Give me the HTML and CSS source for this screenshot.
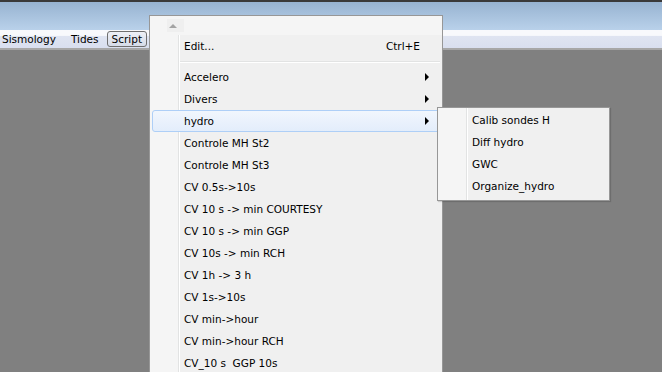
FILE: index.html
```html
<!DOCTYPE html>
<html lang="en">
<head>
    <meta charset="UTF-8">
    <title>Script menu</title>
    <link rel="stylesheet" href="styles.css">
</head>
<body>
    <div class="titlebar"></div>
    <div class="menubar">
        <span class="menubar-item">Sismology</span>
        <span class="menubar-item">Tides</span>
        <span class="menubar-item active">Script</span>
    </div>
    <div class="workspace"></div>

    <div class="popup main-menu">
        <div class="scroll-up"><span class="up-arrow"></span></div>
        <div class="items">
            <div class="item"><span class="label">Edit...</span><span class="shortcut">Ctrl+E</span></div>
            <div class="separator"></div>
            <div class="item"><span class="label">Accelero</span><span class="arrow"></span></div>
            <div class="item"><span class="label">Divers</span><span class="arrow"></span></div>
            <div class="item hover"><span class="label">hydro</span><span class="arrow"></span></div>
            <div class="item"><span class="label">Controle MH St2</span></div>
            <div class="item"><span class="label">Controle MH St3</span></div>
            <div class="item"><span class="label">CV 0.5s-&gt;10s</span></div>
            <div class="item"><span class="label">CV 10 s -&gt; min COURTESY</span></div>
            <div class="item"><span class="label">CV 10 s -&gt; min GGP</span></div>
            <div class="item"><span class="label">CV 10s -&gt; min RCH</span></div>
            <div class="item"><span class="label">CV 1h -&gt; 3 h</span></div>
            <div class="item"><span class="label">CV 1s-&gt;10s</span></div>
            <div class="item"><span class="label">CV min-&gt;hour</span></div>
            <div class="item"><span class="label">CV min-&gt;hour RCH</span></div>
            <div class="item"><span class="label">CV_10 s&nbsp; GGP 10s</span></div>
        </div>
    </div>

    <div class="popup sub-menu">
        <div class="item"><span class="label">Calib sondes H</span></div>
        <div class="item"><span class="label">Diff hydro</span></div>
        <div class="item"><span class="label">GWC</span></div>
        <div class="item"><span class="label">Organize_hydro</span></div>
    </div>
</body>
</html>
```
FILE: styles.css
```css
html, body { margin: 0; height: 100%; overflow: hidden; }
body { font-family: "DejaVu Sans", Tahoma, sans-serif; font-size: 10.5px; color: #000; background: #808080;
    display: flex; flex-direction: column; }

.titlebar { height: 28px; flex: none; border-top: 2px solid #3a3a3a; background: linear-gradient(#97b3d1, #b9d1ea); }
.menubar { height: 18px; flex: none; display: flex; align-items: center; padding: 0 0 0 2px; border-bottom: 2px solid #a7a7a7;
    background: linear-gradient(#f8f9fc 0, #f8f9fc 30%, #dfe4f1 35%, #d9dfef 100%); }
.menubar-item { line-height: 16px; }
.menubar-item:first-child { margin-right: 15px; }
.menubar-item.active { margin-left: 8px; padding: 0 4px; border: 1px solid #6f6f6f; border-radius: 3px;
    background: linear-gradient(#eef0f6, #d6dbe8); line-height: 14px; }
.workspace { flex: 1; }

.popup { position: absolute; box-sizing: border-box; background: #f0f0f0; border: 1px solid #979797; overflow: hidden; }

.main-menu { left: 149px; top: 15px; width: 294px; height: 357px; padding: 0 2px; border-bottom: 0;
    background: linear-gradient(90deg, #f5f5f5 0, #f5f5f5 28px, #e2e3e3 28px, #e2e3e3 29px, #fff 29px, #fff 30px, #f0f0f0 30px); }
.scroll-up { height: 19px; margin: 0 -2px; background: #f5f5f5; position: relative; }
.up-arrow { position: absolute; left: 17px; top: 3px; width: 17px; height: 13px; background: #efefef; }
.up-arrow::after { content: ""; position: absolute; left: 2px; top: 5px; border-left: 4px solid transparent;
    border-right: 4px solid transparent; border-bottom: 4px solid #a3a3a3; }

.item { height: 22px; box-sizing: border-box; display: flex; align-items: center; padding-left: 31px; padding-right: 12px;
    border: 1px solid transparent; border-radius: 3px; }
.item .label { flex: 1; white-space: pre; }
.shortcut { padding-right: 7px; }
.arrow { width: 0; height: 0; border-top: 4px solid transparent; border-bottom: 4px solid transparent;
    border-left: 4px solid #000; margin-right: -2px; }
.item.hover { border-color: #aecff7; background: linear-gradient(#f1f6fd, #e3edfb); }

.separator { height: 9px; margin-left: 28px; position: relative; }
.separator::after { content: ""; position: absolute; left: 0; right: 0; top: 4px; height: 1px;
    background: #e2e3e3; border-bottom: 1px solid #fff; }

.sub-menu { left: 437px; top: 107px; width: 173px; height: 94px; padding: 1px 2px;
    background: linear-gradient(90deg, #f5f5f5 0, #f5f5f5 28px, #e2e3e3 28px, #e2e3e3 29px, #fff 29px, #fff 30px, #f0f0f0 30px);
    box-shadow: 1px 1px 1px rgba(0,0,0,0.15); }
```
